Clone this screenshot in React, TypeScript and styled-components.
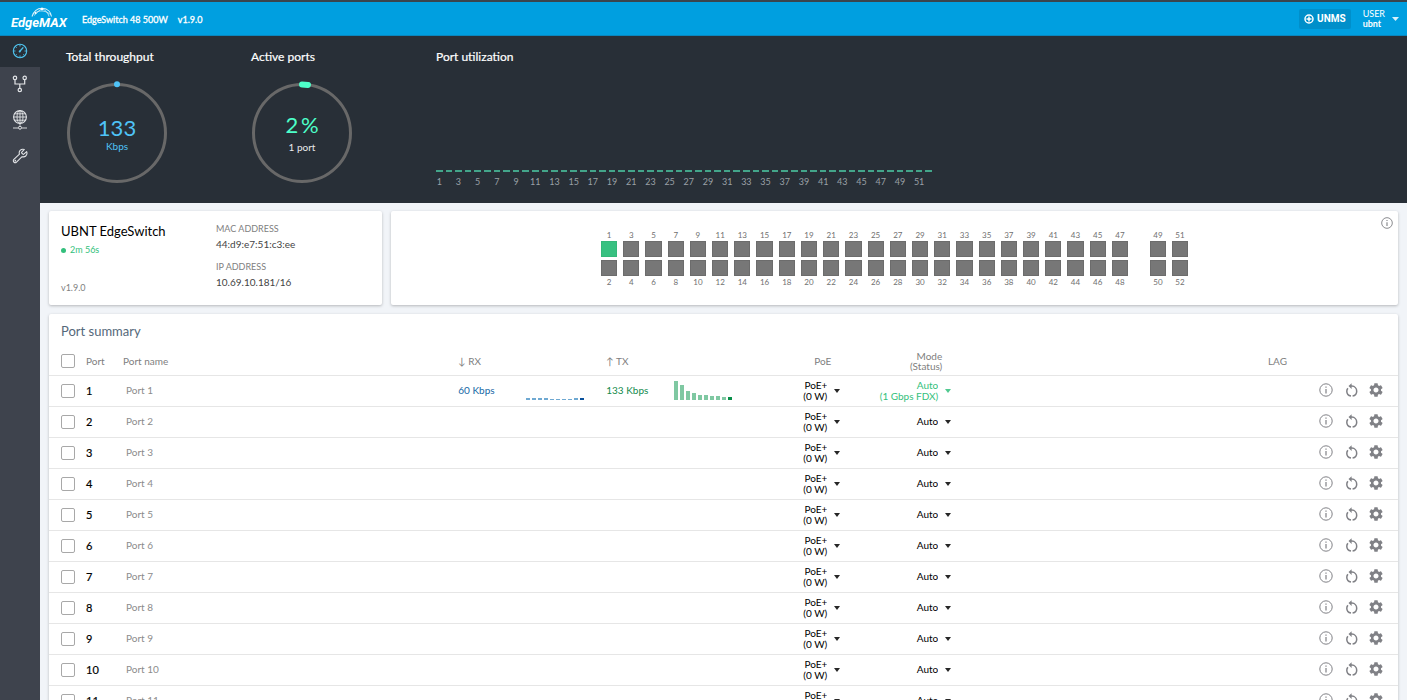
import React from "react";
import styled, { createGlobalStyle, css } from "styled-components";

const GlobalStyle = createGlobalStyle`
  *, *::before, *::after { box-sizing: border-box; }
  body {
    margin: 0;
    background: #f1f4f8;
    color: #1a1a1a;
    font-family: Lato, "Liberation Sans", sans-serif;
    font-size: 11px;
    line-height: 12px;
  }
  button, input, select { font: inherit; color: inherit; }
`;

const Shell = styled.div`
  display: flex;
  flex-direction: column;
  height: 100vh;
  overflow: hidden;
`;

const TopBar = styled.header`
  display: flex;
  flex: none;
  align-items: center;
  height: 36px;
  padding: 0 8px 0 10px;
  border-top: 2px solid #3a444d;
  border-bottom: 1px solid #0a86bd;
  background: #009fe0;
  color: #fff;
`;

const Logo = styled.svg`
  display: block;
  width: 62px;
  height: 26px;
`;

const DeviceModel = styled.span`
  margin: 2px 0 0 10px;
  font-size: 9px;
  -webkit-text-stroke: 0.3px currentColor;
`;

const UnmsButton = styled.button`
  display: flex;
  align-items: center;
  gap: 3px;
  height: 20px;
  margin-left: auto;
  padding: 0 5px;
  border: 0;
  border-radius: 2px;
  background: #008fca;
  color: #fff;
  font-family: Roboto, "Liberation Sans", sans-serif;
  font-size: 10px;
  font-weight: 700;
`;

const UserButton = styled.button`
  display: flex;
  align-items: center;
  gap: 7px;
  margin-left: 12px;
  padding: 0;
  border: 0;
  background: none;
  font-size: 9px;
  line-height: 10px;
  text-align: left;

  b { display: block; }
`;

const Body = styled.div`
  display: flex;
  flex: 1;
  min-height: 0;
`;

const Sidebar = styled.nav`
  flex: none;
  width: 40px;
  background: #3e434d;
`;

const NavLink = styled.a<{ $active?: boolean }>`
  display: flex;
  align-items: center;
  justify-content: center;
  height: ${(p) => (p.$active ? 31 : 36)}px;
  padding-bottom: 2px;
  background: ${(p) => (p.$active ? "#282f37" : "transparent")};
  color: ${(p) => (p.$active ? "#4fc3ee" : "#e3e5e8")};

  svg { display: block; }
`;

const Content = styled.main`
  flex: 1;
  min-width: 0;
  overflow: hidden;
`;

const Stats = styled.section`
  display: flex;
  height: 167px;
  padding: 13px 26px 0;
  background: #282f37;
  color: #fff;
`;

const Stat = styled.div`
  flex: none;
  width: 185px;
`;

const Utilization = styled.div`
  display: flex;
  flex-direction: column;
  width: 496px;
`;

const StatTitle = styled.h2`
  margin: 0;
  font-size: 12px;
  font-weight: 400;
  line-height: 16px;
  -webkit-text-stroke: 0.2px currentColor;
`;

const Gauge = styled.div`
  display: grid;
  width: 102px;
  height: 102px;
  margin-top: 17px;

  > * { grid-area: 1 / 1; }
  > svg { overflow: visible; }
`;

const Reading = styled.div<{ $color: string; $drop: number }>`
  display: flex;
  flex-direction: column;
  align-items: center;
  justify-content: center;
  padding-top: ${(p) => p.$drop}px;
  color: ${(p) => p.$color};

  strong {
    font-size: 22px;
    font-weight: 400;
    line-height: 24px;
  }
`;

const ReadingNote = styled.span<{ $light?: boolean }>`
  font-size: 10px;
  line-height: ${(p) => (p.$light ? 20 : 12)}px;
  color: ${(p) => (p.$light ? "#e8eaec" : "inherit")};
`;

const UtilBars = styled.div`
  display: grid;
  grid-template-columns: repeat(52, 1fr);
  column-gap: 3px;
  margin-top: 105px;
`;

const UtilPort = styled.div`
  display: flex;
  flex-direction: column;
  align-items: center;
  min-width: 0;
  padding-top: 4px;
  border-top: 2px solid #43a58a;
  color: #9aa0a6;
  font-size: 9px;
`;

const Cards = styled.div`
  display: grid;
  grid-template-columns: 333px 1fr;
  gap: 9px;
  padding: 8px 9px;
`;

const Card = styled.section<{ $wide?: boolean }>`
  border-radius: 2px;
  background: #fff;
  box-shadow: 0 1px 3px rgba(0, 0, 0, 0.25);
  ${(p) => p.$wide && css`grid-column: 1 / -1;`}
`;

const DeviceCard = styled(Card)`
  display: flex;
  height: 94px;
  padding: 11px 12px;
`;

const DeviceName = styled.div`
  display: flex;
  flex-direction: column;
  width: 155px;

  h1 {
    margin: 0;
    font-size: 13px;
    font-weight: 400;
    line-height: 18px;
    color: #000;
  }
`;

const Uptime = styled.span`
  display: flex;
  align-items: center;
  gap: 4px;
  margin-top: 4px;
  color: #33bf7c;
  font-size: 9px;

  &::before {
    width: 5px;
    height: 5px;
    border-radius: 50%;
    background: #33bf7c;
    content: "";
  }
`;

const Firmware = styled.span`
  margin-top: auto;
  color: #808080;
  font-size: 9px;
`;

const Addresses = styled.dl`
  margin: 0;

  dt {
    color: #808080;
    font-size: 9px;
    line-height: 14px;
  }
  dd {
    margin: 1px 0 9px;
    color: #444;
    font-size: 10px;
    line-height: 14px;
  }
`;

const PanelCard = styled(Card)`
  display: grid;
  grid-template-columns: 1fr auto 1fr;
  align-items: start;
  padding-top: 6px;
`;

const InfoButton = styled.button`
  justify-self: end;
  margin-right: 5px;
  padding: 0;
  border: 0;
  background: none;
  color: #77797d;
  cursor: pointer;

  svg { display: block; }
`;

const PortPanel = styled.div`
  display: flex;
  grid-column: 2;
  gap: 22px;
  padding-top: 14px;
`;

const PortGroup = styled.div<{ $columns: number; $width: number }>`
  display: grid;
  grid-template-columns: repeat(${(p) => p.$columns}, 1fr);
  gap: 6px;
  width: ${(p) => p.$width}px;
`;

const PortPair = styled.div`
  display: flex;
  flex-direction: column;
  align-items: center;
  gap: 1px;
  color: #707070;
  font-size: 8px;
  line-height: 9px;

  span:last-child { line-height: 11px; }
`;

const Jack = styled.div<{ $up?: boolean }>`
  width: 100%;
  height: 16px;
  border: 1px solid ${(p) => (p.$up ? "#35b87a" : "#6c6c6c")};
  background: ${(p) => (p.$up ? "#38c181" : "#777")};

  & + & { margin-top: 2px; }
`;

const SummaryTitle = styled.h2`
  margin: 0;
  padding: 8px 12px 0;
  color: #54687a;
  font-size: 13px;
  font-weight: 400;
  line-height: 18px;
`;

const Table = styled.table`
  width: 100%;
  border-collapse: collapse;
  table-layout: fixed;

  th, td {
    height: 31px;
    padding: 0;
    border-bottom: 1px solid #e6e6e6;
    text-align: left;
    vertical-align: middle;
  }
  th {
    height: 35px;
    padding-top: 7px;
    color: #808080;
    font-size: 10px;
    font-weight: 400;
    line-height: 10px;
  }
`;

const Col = styled.col<{ $w?: string }>`
  width: ${(p) => p.$w || "auto"};
`;

const HeadCell = styled.th<{ $indent: number }>`
  && { padding-left: ${(p) => p.$indent}px; }
`;

const HeadRight = styled.th<{ $pad?: number }>`
  && {
    padding-right: ${(p) => p.$pad || 0}px;
    text-align: right;
  }
`;

const Check = styled.input`
  display: block;
  width: 14px;
  height: 14px;
  margin: 0 0 0 12px;
  appearance: none;
  border: 1px solid #a8a8a8;
  border-radius: 2px;
  background: #fff;
`;

const PortNumber = styled.span`
  padding-left: 1px;
  color: #000;
  -webkit-text-stroke: 0.2px currentColor;
`;

const NameInput = styled.input`
  display: block;
  width: 160px;
  height: 20px;
  margin-left: 2px;
  padding: 0 0 2px 3px;
  border: 0;
  background: transparent;
  color: #8c8c8c;
  font-size: 10px;
`;

const Rate = styled.div<{ $color: string }>`
  display: flex;
  align-items: center;
  padding-bottom: 2px;
  color: ${(p) => p.$color};
  font-size: 10px;

  span { width: 68px; }
`;

const Spark = styled.div<{ $color: string; $last: string }>`
  display: flex;
  align-items: flex-end;
  gap: 2px;
  height: 20px;

  i {
    width: 4px;
    background: ${(p) => p.$color};
  }
  i:last-child { background: ${(p) => p.$last}; }
`;

const Picker = styled.label<{ $color?: string }>`
  display: flex;
  align-items: center;
  justify-content: flex-end;
  gap: 7px;
  padding-right: 3px;
  color: ${(p) => p.$color || "#000"};
  font-size: 10px;
  line-height: 11px;
  text-align: right;
  white-space: nowrap;

  select {
    display: block;
    width: 50px;
    height: 11px;
    margin-left: auto;
    padding: 0;
    appearance: none;
    border: 0;
    background: none;
    line-height: 11px;
    text-align: right;
    text-align-last: right;
  }
  small {
    display: block;
    font-size: inherit;
  }
`;

const Actions = styled.div`
  display: flex;
  align-items: center;
  gap: 11px;
  justify-content: flex-end;
  padding: 0 15px 2px 0;
  color: #808186;
`;

const IconButton = styled.button`
  display: block;
  padding: 0;
  border: 0;
  background: none;
  cursor: pointer;

  svg { display: block; }
`;

const Caret = ({ size = 6 }: { size?: number }) => (
  <svg width={size} height={4} viewBox="0 0 6 4" preserveAspectRatio="none" aria-hidden="true">
    <path d="M0 0h6L3 4z" fill="currentColor" opacity="0.85" />
  </svg>
);

const InfoIcon = ({ size = 14 }: { size?: number }) => (
  <svg width={size} height={size} viewBox="0 0 14 14" fill="none" stroke="currentColor" aria-hidden="true">
    <circle cx="7" cy="7" r="6.2" />
    <path d="M7 6v4.6M7 3.4v1.3" strokeWidth="1.2" />
  </svg>
);

const RestartIcon = () => (
  <svg width="14" height="14" viewBox="-0.7 0 14 14" fill="none" stroke="currentColor" strokeWidth="1.5" aria-hidden="true">
    <path d="M6.3 13C3.8 12.600 2.100 10.600 2.100 8.200C2.100 7 2.500 6 3.200 5.200" />
    <path d="M6 3.100H7.200C10 3.200 12 5.400 12 8.200C12 10.600 10.300 12.600 7.900 13" />
    <path d="M6.900 0.200V6L3.800 3.100z" fill="currentColor" stroke="none" />
  </svg>
);

const GearIcon = () => (
  <svg width="14" height="14" viewBox="2 2 20 20" aria-hidden="true">
    <path
      fill="currentColor"
      d="M19.140 12.940c.04-.3.060-.610.060-.940 0-.320-.020-.640-.070-.940l2.030-1.580a.49.49 0 0 0 .120-.610l-1.920-3.320a.488.488 0 0 0-.590-.220l-2.390.960c-.5-.380-1.030-.7-1.620-.940l-.360-2.540a.484.484 0 0 0-.480-.410h-3.840c-.240 0-.430.170-.470.410l-.360 2.540c-.590.240-1.130.570-1.620.940l-2.390-.960c-.220-.080-.470 0-.590.220L2.740 8.870c-.120.210-.080.470.120.610l2.030 1.580c-.050.3-.090.630-.090.940s.020.640.070.940l-2.030 1.580a.49.49 0 0 0-.120.610l1.920 3.320c.120.220.370.290.590.220l2.390-.960c.5.380 1.030.7 1.620.940l.360 2.540c.050.240.240.410.480.410h3.840c.240 0 .440-.170.470-.410l.360-2.540c.590-.240 1.130-.560 1.620-.940l2.390.960c.220.080.470 0 .590-.220l1.920-3.320c.120-.220.070-.470-.120-.610l-2.010-1.580zM12 15.600c-1.980 0-3.600-1.620-3.600-3.600s1.620-3.600 3.600-3.600 3.600 1.620 3.600 3.600-1.620 3.600-3.600 3.600z"
    />
  </svg>
);

const DashboardIcon = () => (
  <svg width="16" height="16" viewBox="0 0 16 16" fill="none" stroke="currentColor" aria-hidden="true">
    <circle cx="8" cy="8" r="6.700" strokeWidth="1.1" />
    <path d="M8 1.500v2M8 12.500v2M1.500 8h2M12.500 8h2M3.500 3.500l1.200 1.200M3.500 12.500l1.200-1.200M12.500 12.500l-1.200-1.200" strokeWidth="0.900" />
    <path d="M7.600 8.500l3.700-4.100" strokeWidth="1.400" />
    <circle cx="7.700" cy="8.400" r="1" fill="currentColor" stroke="none" />
  </svg>
);

const ForkIcon = () => (
  <svg width="16" height="18" viewBox="0 0 16 18" fill="none" stroke="currentColor" strokeWidth="1.200" aria-hidden="true">
    <circle cx="3" cy="2.900" r="1.700" />
    <circle cx="12.700" cy="2.900" r="1.700" />
    <circle cx="7.800" cy="15" r="1.700" />
    <path d="M3 4.600v4.400h9.700V4.600M7.800 9v4.300" />
  </svg>
);

const NetworkIcon = () => (
  <svg width="16" height="22" viewBox="0 0 16 22" fill="none" stroke="currentColor" aria-hidden="true">
    <circle cx="8" cy="8" r="6.400" strokeWidth="1.100" />
    <ellipse cx="8" cy="8" rx="3" ry="6.400" strokeWidth="0.900" />
    <path d="M8 1.500v15M1.500 8h13M2.700 4.800h10.600M2.700 11.200h10.600" strokeWidth="0.900" />
    <path d="M1 19h5.300M9.700 19H15" strokeWidth="0.900" />
    <circle cx="8" cy="18.700" r="1.500" />
  </svg>
);

const WrenchIcon = () => (
  <svg width="16" height="16" viewBox="0 0 24 24" fill="none" stroke="currentColor" strokeWidth="1.600" strokeLinejoin="round" aria-hidden="true">
    <path d="M14.700 6.300a1 1 0 0 0 0 1.400l1.600 1.600a1 1 0 0 0 1.400 0l4.300-3.800c1 2.600.3 5-1.400 6.500-1.600 1.400-3.600 1.600-5.500 1L6.800 21.200a2.550 2.550 0 0 1-4-4L11.200 9.300c-.8-2-.4-4.100 1-5.700C13.800 1.900 16.200 1.400 18.500 2.200z" />
    <circle cx="5" cy="19" r=".5" />
  </svg>
);

const EdgeMaxLogo = () => (
  <Logo viewBox="0 0 62 26" role="img" aria-label="EdgeMAX">
    <g fill="none" stroke="#fff" strokeWidth="0.800" opacity="0.850">
      <path d="M22 10.500C24 4.500 28 2 32.500 2.200C37.500 2.600 41 6 41.500 10.500" strokeWidth="1.100" />
      <path d="M25 7C30 3.500 36 4.500 41 9M31 2.200C36 4 38 7 39 10.500M24 9.500C27 7 29 4.500 32 2.200" />
    </g>
    <circle cx="32" cy="3" r="1.200" fill="#fff" />
    <circle cx="25.500" cy="7" r="1" fill="#fff" />
    <text x="1" y="21" fill="#fff" fontFamily="Roboto, Liberation Sans, sans-serif" fontSize="13" fontStyle="italic" fontWeight="700">
      EdgeMAX
    </text>
  </Logo>
);

const UTIL_PORTS = Array.from({ length: 52 }, (_, i) => i + 1);
const ROWS = Array.from({ length: 11 }, (_, i) => i + 1);
const RX_BARS = [2, 2, 2, 2, 1, 1, 1, 1, 2, 2];
const TX_BARS = [19, 15, 9, 7, 5, 5, 4, 4, 3, 3];

const JackGroup = ({ first, pairs, width }: { first: number; pairs: number; width: number }) => (
  <PortGroup $columns={pairs} $width={width}>
    {Array.from({ length: pairs }, (_, i) => first + i * 2).map((n) => (
      <PortPair key={n}>
        <span>{n}</span>
        <Jack $up={n === 1} />
        <Jack />
        <span>{n + 1}</span>
      </PortPair>
    ))}
  </PortGroup>
);

const Sparkline = ({ values, color, last }: { values: number[]; color: string; last: string }) => (
  <Spark $color={color} $last={last}>
    {values.map((v, i) => (
      <i key={i} style={{ height: v }} />
    ))}
  </Spark>
);

const PortRow = ({ n }: { n: number }) => {
  const up = n === 1;
  return (
    <tr>
      <td>
        <Check type="checkbox" aria-label={`Select port ${n}`} />
      </td>
      <td>
        <PortNumber>{n}</PortNumber>
      </td>
      <td>
        <NameInput defaultValue={`Port ${n}`} aria-label={`Name of port ${n}`} />
      </td>
      <td>
        {up && (
          <Rate $color="#1668a5">
            <span>60 Kbps</span>
            <Sparkline values={RX_BARS} color="#6fa9d2" last="#0a519c" />
          </Rate>
        )}
      </td>
      <td>
        {up && (
          <Rate $color="#128a4c">
            <span>133 Kbps</span>
            <Sparkline values={TX_BARS} color="#7fc8a2" last="#078e48" />
          </Rate>
        )}
      </td>
      <td>
        <Picker>
          <span>
            <select aria-label={`PoE of port ${n}`}>
              <option>PoE+</option>
            </select>
            <small>(0 W)</small>
          </span>
          <Caret />
        </Picker>
      </td>
      <td>
        <Picker $color={up ? "#33bf7c" : undefined}>
          <span>
            <select aria-label={`Mode of port ${n}`}>
              <option>Auto</option>
            </select>
            {up && <small>(1 Gbps FDX)</small>}
          </span>
          <Caret />
        </Picker>
      </td>
      <td />
      <td>
        <Actions>
          <IconButton type="button" aria-label={`Port ${n} details`}>
            <InfoIcon />
          </IconButton>
          <IconButton type="button" aria-label={`Restart port ${n}`}>
            <RestartIcon />
          </IconButton>
          <IconButton type="button" aria-label={`Configure port ${n}`}>
            <GearIcon />
          </IconButton>
        </Actions>
      </td>
    </tr>
  );
};

export default function App() {
  return (
    <Shell>
      <GlobalStyle />
      <TopBar>
        <EdgeMaxLogo />
        <DeviceModel>EdgeSwitch 48 500W</DeviceModel>
        <DeviceModel>v1.9.0</DeviceModel>
        <UnmsButton type="button">
          <svg width="10" height="10" viewBox="0 0 10 10" fill="none" stroke="#fff" aria-hidden="true">
            <circle cx="5" cy="5" r="4" strokeWidth="1.500" />
            <path d="M5 2.500v5M2.500 5h5" strokeWidth="1.500" />
          </svg>
          UNMS
        </UnmsButton>
        <UserButton type="button">
          <span>
            USER
            <b>ubnt</b>
          </span>
          <Caret size={7} />
        </UserButton>
      </TopBar>
      <Body>
        <Sidebar aria-label="Main">
          <NavLink href="#dashboard" $active aria-label="Dashboard">
            <DashboardIcon />
          </NavLink>
          <NavLink href="#topology" aria-label="Switching">
            <ForkIcon />
          </NavLink>
          <NavLink href="#routing" aria-label="Routing">
            <NetworkIcon />
          </NavLink>
          <NavLink href="#tools" aria-label="Tools">
            <WrenchIcon />
          </NavLink>
        </Sidebar>
        <Content>
          <Stats>
            <Stat>
              <StatTitle>Total throughput</StatTitle>
              <Gauge>
                <svg width="102" height="102" viewBox="0 0 102 102" aria-hidden="true">
                  <circle cx="51" cy="51" r="48.500" fill="none" stroke="#686868" strokeWidth="3" />
                  <circle cx="51" cy="2.300" r="3" fill="#4fc3f7" />
                </svg>
                <Reading $color="#4fc3f7" $drop={2}>
                  <strong>133</strong>
                  <ReadingNote>Kbps</ReadingNote>
                </Reading>
              </Gauge>
            </Stat>
            <Stat>
              <StatTitle>Active ports</StatTitle>
              <Gauge>
                <svg width="102" height="102" viewBox="0 0 102 102" aria-hidden="true">
                  <circle cx="51" cy="51" r="48.500" fill="none" stroke="#686868" strokeWidth="3" />
                  <path d="M51 2.500a48.500 48.500 0 0 1 6 .400" fill="none" stroke="#4dffc9" strokeWidth="6" strokeLinecap="round" />
                </svg>
                <Reading $color="#4dffc9" $drop={4}>
                  <strong>{"2\u2009%"}</strong>
                  <ReadingNote $light>1 port</ReadingNote>
                </Reading>
              </Gauge>
            </Stat>
            <Utilization>
              <StatTitle>Port utilization</StatTitle>
              <UtilBars>
                {UTIL_PORTS.map((n) => (
                  <UtilPort key={n}>{n % 2 === 1 && <span>{n}</span>}</UtilPort>
                ))}
              </UtilBars>
            </Utilization>
          </Stats>
          <Cards>
            <DeviceCard>
              <DeviceName>
                <h1>UBNT EdgeSwitch</h1>
                <Uptime>2m 56s</Uptime>
                <Firmware>v1.9.0</Firmware>
              </DeviceName>
              <Addresses>
                <dt>MAC ADDRESS</dt>
                <dd>44:d9:e7:51:c3:ee</dd>
                <dt>IP ADDRESS</dt>
                <dd>10.69.10.181/16</dd>
              </Addresses>
            </DeviceCard>
            <PanelCard>
              <PortPanel>
                <JackGroup first={1} pairs={24} width={527} />
                <JackGroup first={49} pairs={2} width={38} />
              </PortPanel>
              <InfoButton type="button" aria-label="Port legend">
                <InfoIcon size={12} />
              </InfoButton>
            </PanelCard>
            <Card $wide>
              <SummaryTitle>Port summary</SummaryTitle>
              <Table>
                <colgroup>
                  <Col $w="36px" />
                  <Col $w="36px" />
                  <Col $w="25%" />
                  <Col $w="148px" />
                  <Col $w="148px" />
                  <Col $w="89px" />
                  <Col $w="111px" />
                  <Col />
                  <Col $w="111px" />
                </colgroup>
                <thead>
                  <tr>
                    <th>
                      <Check type="checkbox" aria-label="Select all ports" />
                    </th>
                    <HeadCell $indent={1}>Port</HeadCell>
                    <HeadCell $indent={2}>Port name</HeadCell>
                    <th>↓ RX</th>
                    <th>↑ TX</th>
                    <HeadRight $pad={12}>PoE</HeadRight>
                    <HeadRight $pad={12}>
                      Mode
                      <br />
                      (Status)
                    </HeadRight>
                    <HeadRight>LAG</HeadRight>
                    <th />
                  </tr>
                </thead>
                <tbody>
                  {ROWS.map((n) => (
                    <PortRow key={n} n={n} />
                  ))}
                </tbody>
              </Table>
            </Card>
          </Cards>
        </Content>
      </Body>
    </Shell>
  );
}
